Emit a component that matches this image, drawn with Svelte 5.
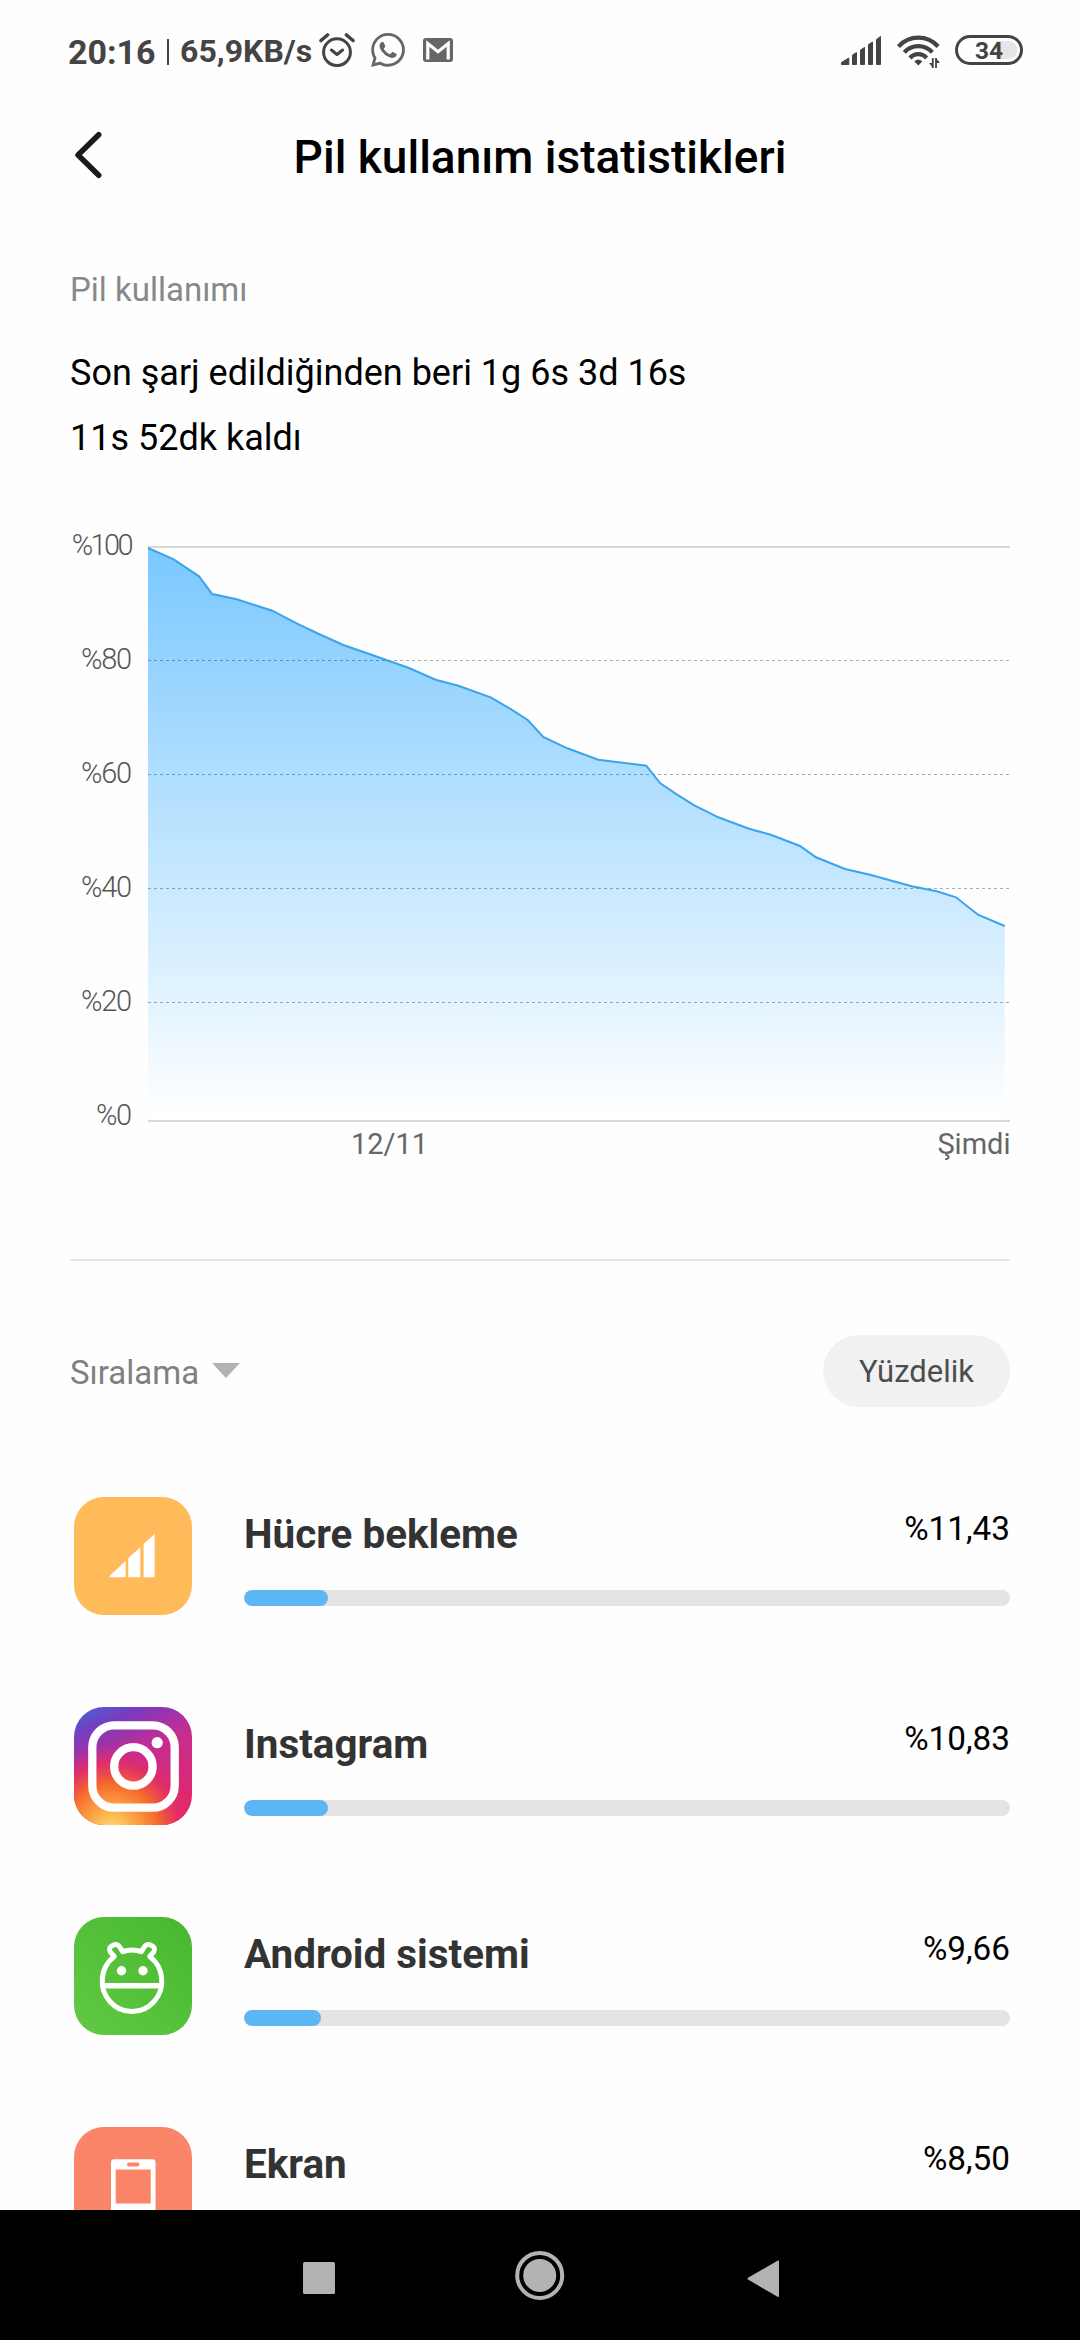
<script lang="ts">
  interface Usage {
    name: string;
    icon: 'cell' | 'instagram' | 'android' | 'screen';
    percent: number;
  }

  const apps: Usage[] = [
    { name: 'Hücre bekleme', icon: 'cell', percent: 11.43 },
    { name: 'Instagram', icon: 'instagram', percent: 10.83 },
    { name: 'Android sistemi', icon: 'android', percent: 9.66 },
    { name: 'Ekran', icon: 'screen', percent: 8.5 },
  ];

  // x offset from the left of the plot, battery line y inside the chart
  const points: [number, number][] = [
    [0, 18], [25.7, 29.3], [51, 46.3], [64.3, 64], [88.7, 69.3], [124.3, 80.7],
    [148.7, 93.3], [168.7, 103], [195.3, 115], [222, 124.3], [261, 138], [287.7, 149.7],
    [310.3, 155.7], [342.7, 167.3], [362, 178.7], [379.7, 190], [395.3, 207],
    [419.3, 218.3], [450.3, 229.7], [498.3, 235.7], [512, 253], [528.7, 264.3],
    [546.3, 275.3], [570.3, 287.3], [601, 298.7], [622.7, 304.7], [652, 316],
    [668, 327.3], [697, 339], [722, 344.7], [763.7, 356.3], [788.7, 361.3],
    [808, 367.3], [830, 384.7], [856.7, 396],
  ];
  const left = 78;
  const line = points.map(([x, y]) => `${x + left},${y}`).join(' ');
  const area = `${left},590 ${line} ${856.7 + left},590`;

  const levels = [100, 80, 60, 40, 20, 0];

  function format(n: number) {
    return '%' + n.toFixed(2).replace('.', ',');
  }
</script>

<div class="screen">
  <div class="status">
    <span class="clock">20:16</span>
    <span class="pipe"></span>
    <span class="speed">65,9KB/s</span>
    <svg class="alarm" width="36" height="34" viewBox="0 0 36 34" fill="none" stroke="#444" stroke-width="3" stroke-linecap="round" stroke-linejoin="round">
      <circle cx="18" cy="19.2" r="13.4" />
      <path d="m12.4 17 5.6 4.5 5.6-4.5" />
      <path d="M2 7.5 8.5 2M27.5 2 34 7.5" stroke-width="3.6" />
    </svg>
    <svg class="whatsapp" width="34" height="34" viewBox="2 2 20 20" fill="#666">
      <path d="M12.04 2C6.58 2 2.13 6.45 2.13 11.91C2.13 13.66 2.59 15.36 3.45 16.86L2.05 22L7.3 20.62C8.75 21.41 10.38 21.83 12.04 21.83C17.5 21.83 21.95 17.38 21.95 11.92C21.95 9.27 20.92 6.78 19.05 4.91C17.18 3.03 14.69 2 12.04 2M12.05 3.67C14.25 3.67 16.31 4.53 17.87 6.09C19.42 7.65 20.28 9.72 20.28 11.92C20.28 16.46 16.58 20.15 12.04 20.15C10.56 20.15 9.11 19.76 7.85 19L7.55 18.83L4.43 19.65L5.26 16.61L5.06 16.29C4.24 15 3.8 13.47 3.8 11.91C3.81 7.37 7.5 3.67 12.05 3.67M8.53 7.33C8.37 7.33 8.1 7.39 7.87 7.64C7.65 7.89 7 8.5 7 9.71C7 10.93 7.89 12.1 8 12.27C8.14 12.44 9.76 14.94 12.25 16C12.84 16.27 13.3 16.42 13.66 16.53C14.25 16.72 14.79 16.69 15.22 16.63C15.7 16.56 16.68 16.03 16.89 15.45C17.1 14.87 17.1 14.38 17.04 14.27C16.97 14.17 16.81 14.11 16.56 14C16.31 13.86 15.09 13.26 14.87 13.18C14.64 13.1 14.5 13.06 14.31 13.3C14.15 13.55 13.67 14.11 13.53 14.27C13.38 14.44 13.24 14.46 13 14.34C12.74 14.21 11.94 13.95 11 13.11C10.26 12.45 9.77 11.64 9.62 11.39C9.5 11.15 9.61 11 9.73 10.89C9.84 10.78 10 10.6 10.1 10.45C10.23 10.31 10.27 10.2 10.35 10.04C10.43 9.87 10.39 9.73 10.33 9.61C10.27 9.5 9.77 8.26 9.56 7.77C9.36 7.29 9.16 7.25 9 7.25C8.86 7.25 8.7 7.25 8.53 7.33Z" />
    </svg>
    <svg class="gmail" width="30" height="24" viewBox="0 0 30 24">
      <rect width="30" height="24" rx="3" fill="#666" />
      <path d="M4.8 21.5V5.5L15 13.8 25.2 5.5v16" fill="none" stroke="#fff" stroke-width="3.2" />
    </svg>
    <svg class="signal" width="40" height="29" viewBox="0 0 40 29" fill="#444" stroke="#444" stroke-linejoin="round">
      <path d="M.5 26.5 7.8 22v6.5H.5zM11.5 19l4-2.5v12h-4zM19.5 14l4-2.5v17h-4zM27.5 8.5l4-2.5v22.5h-4zM35.5 3.5l4-3v28h-4z" />
    </svg>
    <svg class="wifi" width="43" height="34" viewBox="0 0 43 34" fill="none" stroke="#444" stroke-width="4.2">
      <path d="M1.5 11.5a26.5 26.5 0 0 1 39.6 0M7.3 17.3a18.8 18.8 0 0 1 28 0M13 23a11 11 0 0 1 16.6 0" />
      <path d="M17.3 26.5q4-4 8 0l-4 4z" fill="#444" stroke="none" />
      <path d="M35.8 23v10M39 23v10" stroke-width="1.8" />
      <path d="M36 33l-4-5h4zM39 23l4 5h-4z" fill="#444" stroke="none" />
    </svg>
    <svg class="battery" width="68" height="30" viewBox="0 0 68 30">
      <path d="M41 6h12.5a9 9 0 0 1 0 18H41z" fill="#e6e6e6" />
      <rect x="1.5" y="1.5" width="65" height="27" rx="13.5" fill="none" stroke="#444" stroke-width="3" />
      <text x="34" y="24" text-anchor="middle">34</text>
    </svg>
  </div>

  <header>
    <svg class="back" width="30" height="50" viewBox="0 0 30 50" fill="none" stroke="#1a1a1a" stroke-width="5.5" stroke-linecap="round" stroke-linejoin="round">
      <path d="M25.7 4.7 5 25l20.7 20.3" />
    </svg>
    <h1>Pil kullanım istatistikleri</h1>
  </header>

  <main>
    <h2>Pil kullanımı</h2>
    <p>Son şarj edildiğinden beri 1g 6s 3d 16s</p>
    <p>11s 52dk kaldı</p>

    <svg class="chart" width="940" height="640" viewBox="0 0 940 640">
      <defs>
        <linearGradient id="fill" x1="0" y1="18" x2="0" y2="590" gradientUnits="userSpaceOnUse">
          <stop offset="0" stop-color="#7ac8ff" />
          <stop offset="1" stop-color="#fff" />
        </linearGradient>
      </defs>
      <path d="M78 17h862M78 591h862" stroke="#d8d8d8" stroke-width="2" />
      <polygon points={area} fill="url(#fill)" />
      {#each levels as level, i}
        <text class="level" class:full={level === 100} x="61" y={25 + i * 114} text-anchor="end">%{level}</text>
        {#if level > 0 && level < 100}
          <path d="M78 {16.5 + i * 114}h862" stroke="#000" stroke-opacity=".32" stroke-dasharray="3 3" />
        {/if}
      {/each}
      <polyline points={line} fill="none" stroke="#3ba3ec" stroke-width="2" />
      <text class="time" x="319.5" y="624" text-anchor="middle">12/11</text>
      <text class="time" x="940.5" y="624" text-anchor="end">Şimdi</text>
    </svg>

    <hr />

    <div class="controls">
      <button type="button" class="sort">
        Sıralama
        <svg width="28" height="15" viewBox="0 0 28 15"><path d="M0 0h28L14 15z" fill="#b3b3b3" /></svg>
      </button>
      <button type="button" class="mode">Yüzdelik</button>
    </div>

    <ul>
      {#each apps as app}
        <li>
          <svg class="icon" width="118" height="118" viewBox="0 0 118 118">
            {#if app.icon === 'cell'}
              <rect width="118" height="118" rx="30" fill="#ffba5a" />
              <path d="M35.5 79 51.7 64v16.3H35.5zM54.3 61l12-10.7v30h-12zM69.6 47l11-10v43.3h-11z" fill="#fff" />
            {:else if app.icon === 'instagram'}
              <defs>
                <linearGradient id="ig-base" x1="0" y1="0" x2=".45" y2="1">
                  <stop offset="0" stop-color="#4168d8" />
                  <stop offset=".22" stop-color="#7a3abf" />
                  <stop offset=".5" stop-color="#c32d92" />
                  <stop offset="1" stop-color="#e0286c" />
                </linearGradient>
                <radialGradient id="ig-glow" cx=".32" cy="1.05" r=".72">
                  <stop offset="0" stop-color="#ffdc80" />
                  <stop offset=".2" stop-color="#fdb850" />
                  <stop offset=".55" stop-color="#f66b2c" />
                  <stop offset=".8" stop-color="#e52e62" stop-opacity=".8" />
                  <stop offset="1" stop-color="#d62976" stop-opacity="0" />
                </radialGradient>
              </defs>
              <rect width="118" height="118" rx="30" fill="url(#ig-base)" />
              <rect width="118" height="118" rx="30" fill="url(#ig-glow)" />
              <g fill="none" stroke="#fff" stroke-width="8.3">
                <rect x="18.3" y="18.3" width="82.4" height="82.4" rx="22" />
                <circle cx="59.4" cy="59.4" r="19.2" />
              </g>
              <circle cx="83.2" cy="35.7" r="5.6" fill="#fff" />
            {:else if app.icon === 'android'}
              <defs>
                <linearGradient id="droid" x1="0" y1="1" x2="1" y2="0">
                  <stop offset="0" stop-color="#62c944" />
                  <stop offset="1" stop-color="#46b82e" />
                </linearGradient>
              </defs>
              <rect width="118" height="118" rx="30" fill="url(#droid)" />
              <g fill="none" stroke="#fff" stroke-width="5" stroke-linejoin="round">
                <path d="M40.3 39.5 36.3 35Q34 30.5 38.5 28.4 43 26 45.6 29.8L48.7 34.7Q58 31.3 67.3 34.7L70.4 29.8Q73 26 77.5 28.4 82 30.5 79.7 35L75.7 39.5A29.8 30.5 0 1 1 40.3 39.5Z" />
                <path d="M29 68.7h58" stroke-width="5.5" />
              </g>
              <path d="M47.5 53.7h.01M69 53.7h.01" stroke="#fff" stroke-width="9.4" stroke-linecap="round" />
            {:else}
              <rect width="118" height="118" rx="30" fill="#fa8569" />
              <rect x="37" y="32.3" width="44.5" height="54" rx="3" fill="#fff" />
              <rect x="41.7" y="42.5" width="35" height="34" fill="#fa8569" />
              <rect x="53" y="35.5" width="12.3" height="4" rx="2" fill="#fa8569" />
            {/if}
          </svg>
          <div class="body">
            <div class="row">
              <span class="name">{app.name}</span>
              <span class="percent">{format(app.percent)}</span>
            </div>
            <div class="track"><div class="bar" style="width: {Math.round(app.percent)}%"></div></div>
          </div>
        </li>
      {/each}
    </ul>
  </main>

  <nav>
    <svg width="222" height="130" viewBox="0 0 222 130"><rect x="96" y="52" width="32" height="32" rx="1.5" /></svg>
    <svg width="222" height="130" viewBox="0 0 222 130">
      <circle cx="110.7" cy="65.4" r="16.5" />
      <circle cx="110.7" cy="65.4" r="22.5" fill="none" stroke="#b3b3b3" stroke-width="4" />
    </svg>
    <svg width="222" height="130" viewBox="0 0 222 130"><path d="M97.5 68.7 127 51.5v34.4z" stroke="#b3b3b3" stroke-width="2" stroke-linejoin="round" /></svg>
  </nav>
</div>

<style>
  :global(body) {
    background: #fff;
  }
  .screen {
    display: flex;
    flex-direction: column;
    width: 1080px;
    height: 2340px;
    overflow: hidden;
    background: #fefefe;
    color: #000;
    font-family: Roboto, sans-serif;
  }

  .status {
    display: flex;
    align-items: center;
    flex-shrink: 0;
    box-sizing: border-box;
    height: 100px;
    padding: 0 57px 0 68px;
    color: #444;
    font-weight: 700;
  }
  .clock {
    padding-top: 3px;
    font-size: 34px;
  }
  .pipe {
    width: 2.5px;
    height: 26px;
    margin: 4px 11px 0 11px;
    background: #444;
  }
  .speed {
    padding-top: 2px;
    font-size: 32px;
  }
  .alarm { margin-left: 7px; }
  .whatsapp { margin-left: 16px; }
  .gmail { margin-left: 18px; }
  .signal { margin-left: auto; }
  .wifi { margin: 3px 15px 0 16px; }
  .battery text {
    fill: #444;
    font-size: 24.5px;
    font-weight: 700;
  }

  header {
    display: grid;
    grid-template-columns: 130px 1fr 130px;
    align-items: center;
    flex-shrink: 0;
    height: 110px;
  }
  .back { margin-left: 73px; }
  h1 {
    margin: 0;
    padding-top: 4px;
    font-size: 46px;
    font-weight: 500;
    text-align: center;
    white-space: nowrap;
  }

  main {
    flex: 1;
    min-height: 0;
    overflow: hidden;
    padding: 60px 70px 0;
  }
  h2 {
    margin: 0 0 31px;
    color: #888;
    font-size: 33px;
    font-weight: 400;
    line-height: 40px;
  }
  p {
    margin: 0;
    font-size: 36px;
    line-height: 65px;
  }
  .chart {
    display: block;
    margin-top: 59px;
    overflow: visible;
  }
  .chart text {
    fill: #666;
    font-size: 29px;
  }
  .chart .level {
    fill: #555;
    font-weight: 300;
    letter-spacing: -1.2px;
  }
  .chart .full { letter-spacing: -2.6px; }
  hr {
    height: 2px;
    margin: 89px 0 74px;
    border: 0;
    background: #e5e5e5;
  }

  .controls {
    display: flex;
    align-items: center;
    justify-content: space-between;
    height: 72px;
  }
  button {
    padding: 0;
    border: none;
    background: none;
    font-family: inherit;
  }
  .sort {
    display: flex;
    align-items: center;
    gap: 13px;
    padding-top: 2px;
    color: #808080;
    font-size: 33px;
  }
  .sort svg { margin-top: -4px; }
  .mode {
    width: 187px;
    height: 72px;
    border-radius: 36px;
    background: #f1f1f1;
    color: #4d4d4d;
    font-size: 31px;
  }

  ul {
    margin: 44px 0 0;
    padding: 0;
    list-style: none;
  }
  li {
    display: flex;
    align-items: flex-start;
    height: 210px;
  }
  .icon {
    flex-shrink: 0;
    margin: 46px 52px 0 4px;
  }
  .body {
    flex: 1;
    padding-top: 59px;
  }
  .row {
    display: flex;
    justify-content: space-between;
    align-items: flex-start;
    height: 80px;
  }
  .name {
    color: #333;
    font-size: 40.4px;
    font-weight: 700;
    line-height: 50px;
  }
  .percent {
    font-size: 33.3px;
    line-height: 37px;
  }
  .track {
    height: 16px;
    border-radius: 8px;
    background: #e4e4e4;
    overflow: hidden;
  }
  .bar {
    height: 100%;
    border-radius: 8px;
    background: #5cb6f5;
  }

  nav {
    display: flex;
    justify-content: center;
    flex-shrink: 0;
    height: 130px;
    background: #000;
    fill: #b3b3b3;
  }
</style>
